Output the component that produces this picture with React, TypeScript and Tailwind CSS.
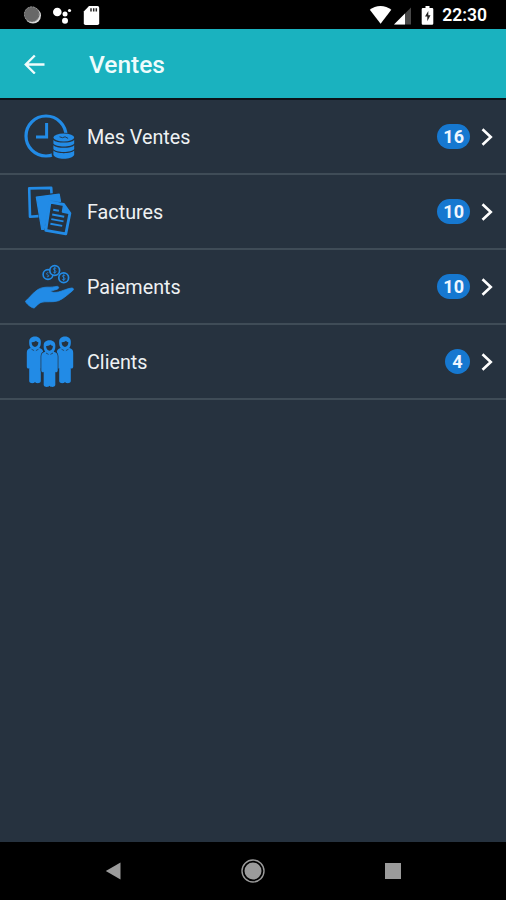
import type { ReactNode } from "react";

const SalesIcon = () => (
  <svg viewBox="8 5 52 52" className="size-[52px]" fill="none" stroke="#228be6">
    <circle cx="30" cy="30" r="20" strokeWidth="3.2" />
    <path d="M30.6 17v14H20" strokeWidth="3" />
    <path
      d="M36.5 32c0-6 22.5-6 22.5 0v16.500c0 7-22.500 7-22.500 0z"
      fill="#26323f"
      stroke="#26323f"
      strokeWidth="1.600"
    />
    <g fill="#228be6" stroke="none">
      <ellipse cx="47.800" cy="31.500" rx="10.400" ry="4" />
      <path d="M37.400 33.900c3 3.500 17.800 3.500 20.800 0v3.700c-2 4-18.800 4-20.800 0z" />
      <path d="M37.400 39.200c3 3.500 17.800 3.500 20.800 0v3.700c-2 4-18.800 4-20.800 0z" />
      <path d="M37.400 44.500c3 3.500 17.800 3.500 20.800 0v4.200c-2 5.300-18.800 5.300-20.800 0z" />
    </g>
    <path d="M43.500 30.800l3 .9 2.600-.9 3 1.600" stroke="#26323f" strokeWidth=".9" />
  </svg>
);

const InvoiceIcon = () => (
  <svg viewBox="8 7.500 52 52" className="size-[52px]" fill="none" stroke="#228be6" strokeLinejoin="round">
    <path d="M22.500 37.600l-8.500.6-.800-28.300 22-.500.300 5.500" strokeWidth="2.600" />
    <path d="M20.300 18.600l22.900-3 1.300 7.200-10.300-.500-6.200 28.500h-2.300z" fill="#228be6" strokeWidth="1.200" />
    <path d="M34 23.600l13.700 2.400 6.200 8.700-4.100 20.700-20-3.500z" fill="#26323f" strokeWidth="2.800" />
    <path d="M47.700 26.200l-1.200 7.200 7.200 1.700z" fill="#228be6" strokeWidth="1.500" />
    <path d="M37.200 31.300l5.700 1M36.200 36l12 2.300M35.300 40.600l12.200 2.300M34.400 45.200l11.800 2.200" strokeWidth="1.900" />
  </svg>
);

const PaymentIcon = () => (
  <svg viewBox="8 5.500 52 52" className="size-[52px]" fill="none" stroke="#228be6">
    <circle cx="32" cy="19" r="4.900" strokeWidth="1.600" />
    <circle cx="38.700" cy="15" r="4.900" fill="#26323f" strokeWidth="1.700" />
    <circle cx="47.700" cy="22.200" r="4.900" strokeWidth="1.700" />
    <path
      d="M40.200 12.900c-2.800-1.500-3.500 1.200-1.500 1.900 2.400.8 1.200 3.500-1.400 1.900M38.700 11.800v6.400M49.200 20.100c-2.800-1.500-3.500 1.200-1.500 1.900 2.400.8 1.200 3.500-1.400 1.900M47.700 19v6.400M32.300 17.200c-2.500 0-2 2-.4 2.300 1.500.4 1 2-1 1.600"
      strokeWidth=".9"
    />
    <path
      d="M9.500 45.600C14 42 17 37 22 34c3.500-2.200 8-2.500 12-2.300 3.500 0 5-.9 7.700-.8 1.400.3 1.200 2-.2 2.700-2 1.100-4.700 1-6.800 2.200.7 1.400 4.800 1.200 7.600.7 5-1.200 9-3.600 13.500-4 1.900 0 2.300 1.600.8 2.700-4 3-8.600 7.700-14 10-5.600 2-13 .2-17.600 1.700-2.700 1.200-4.400 3.400-6.700 5.500-1.500.8-8.500-4-8.800-6.800z"
      fill="#228be6"
      strokeWidth=".8"
    />
  </svg>
);

const Person = ({ x, y }: { x: number; y: number }) => (
  <g transform={`translate(${x} ${y})`}>
    <path
      d="M-5.800 5C-5.800-1.400 5.800-1.400 5.800 5c.2 2.800-.2 4.800-1.500 6.800C7.300 12.500 8.200 14 8.200 16.500V30.500c0 1.800-2 2.200-2.400 1.200V45c-.6 2.500-4.600 2.500-5.800.8-1.200 1.700-5.200 1.700-5.800-.8V31.700C-6.200 32.700-8.200 32.300-8.200 30.500V16.500c0-2.500.9-4 3.900-4.700-1.300-2-1.700-4-1.500-6.800z"
      fill="#228be6"
      stroke="#26323f"
      strokeWidth="1.400"
      paintOrder="stroke"
    />
    <path d="M-3.400 6c2 .2 3.600-.4 4.400-1.400.5.800 1.200 1.300 2.400 1.400C3.400 8.900 1.600 10.700 0 10.700S-3.400 8.900-3.400 6z" fill="#26323f" />
    <path d="M-3.500 13l2.600 1.400M3.500 13L.9 14.400" stroke="#26323f" strokeWidth=".7" />
  </g>
);

const ClientsIcon = () => (
  <svg viewBox="8 8 52 52" className="size-[52px]">
    <Person x={19} y={8.200} />
    <Person x={49} y={8.200} />
    <Person x={33.500} y={12} />
  </svg>
);

type MenuItem = { label: string; count: number; icon: ReactNode };

const items: MenuItem[] = [
  { label: "Mes Ventes", count: 16, icon: <SalesIcon /> },
  { label: "Factures", count: 10, icon: <InvoiceIcon /> },
  { label: "Paiements", count: 10, icon: <PaymentIcon /> },
  { label: "Clients", count: 4, icon: <ClientsIcon /> },
];

const StatusBar = () => (
  <div className="flex h-[29px] shrink-0 items-center justify-between bg-black pr-[19px] pl-[23px]">
    <svg width="80" height="29" viewBox="23 0 80 29" fill="#fff">
      <circle cx="33" cy="15.600" r="8" fill="#d8d8d8" />
      <circle cx="31.800" cy="14.300" r="7.800" fill="#686868" />
      <circle cx="31.800" cy="14.300" r="7.400" fill="none" stroke="#999" strokeWidth="1" strokeDasharray="1.500 1.500" />
      <circle cx="57.300" cy="12" r="4.300" />
      <circle cx="65" cy="14" r="2.500" />
      <circle cx="69.500" cy="10.500" r="1.600" />
      <circle cx="65" cy="20.700" r="3" />
      <path d="M89 6h8.500q1.700 0 1.700 1.700v15.600q0 1.700-1.700 1.700h-12q-1.700 0-1.700-1.700V11.500z" />
      <path d="M91 8.300v3.200M93.700 8.300v3.200M96.300 8.300v3.200" stroke="#222" strokeWidth="1.500" />
    </svg>
    <div className="flex items-center gap-[8px]">
      <svg width="65" height="29" viewBox="370 0 65 29" fill="#fff">
        <path d="M370.800 9.800C376.500 4.700 386.500 4.700 392.300 9.800L381.600 23.700z" />
        <path d="M412 7.500V24.500H395z" fill="#484848" />
        <path d="M406 13.500V24.500H395z" />
        <path d="M426.500 6h4v2h2.600q1.200 0 1.200 1.200v14.300q0 1.300-1.200 1.300h-9.200q-1.200 0-1.200-1.300V9.200q0-1.200 1.200-1.200h2.600z" />
        <path d="M429.300 11l-3.300 5.500h2.300v4.700l3.200-5.900h-2.200z" fill="#222" />
      </svg>
      <span className="pt-[3px] text-[17.500px] leading-none font-semibold text-white">22:30</span>
    </div>
  </div>
);

const AppBar = () => (
  <header className="flex h-[71px] shrink-0 items-center border-b-2 border-[#0b1318] bg-[#1ab2bf] pl-[24px]">
    <svg width="21" height="20" viewBox="0 0 21 20" fill="none" stroke="#effcfc" strokeWidth="2.400">
      <path d="M20.500 10.500H2M10.800 1.500L1.800 10.500l9 9" />
    </svg>
    <h1 className="ml-[44px] pt-[4px] text-[24.500px] leading-none font-medium text-[#effcfc]">Ventes</h1>
  </header>
);

const MenuRow = ({ label, count, icon }: MenuItem) => (
  <li className="flex h-[75px] items-center border-b-2 border-[#3f4c57] pr-[13px] pl-[24px]">
    {icon}
    <span className="ml-[11px] flex-1 pt-[2px] text-[19.750px] leading-none text-[#eef1f3]">{label}</span>
    <span className="flex h-[25px] min-w-[25px] items-center justify-center rounded-full bg-[#1678d0] px-[6px] pt-px text-[18px] leading-none font-bold text-[#eef6ff]">
      {count}
    </span>
    <svg width="12" height="18" viewBox="0 0 12 18" className="ml-[11px]" fill="none" stroke="#fff" strokeWidth="2.600">
      <path d="M1.500 1.200L9.800 9l-8.300 7.800" />
    </svg>
  </li>
);

const NavBar = () => (
  <nav className="flex h-[58px] shrink-0 items-center justify-between bg-black pr-[105px] pl-[105px]">
    <svg width="16" height="18" viewBox="0 0 16 18">
      <path d="M15.500.5v17L.8 9z" fill="#9b9b9b" />
    </svg>
    <svg width="24" height="24" viewBox="0 0 24 24">
      <circle cx="12" cy="12" r="11" fill="none" stroke="#9b9b9b" strokeWidth="1.400" />
      <circle cx="12" cy="12" r="8.500" fill="#9b9b9b" />
    </svg>
    <div className="size-4 bg-[#9b9b9b]" />
  </nav>
);

export default function App() {
  return (
    <div className="flex h-[900px] w-[506px] flex-col overflow-hidden bg-[#26323f] font-[Roboto,sans-serif]">
      <StatusBar />
      <AppBar />
      <ul className="flex-1">
        {items.map((item) => (
          <MenuRow key={item.label} {...item} />
        ))}
      </ul>
      <NavBar />
    </div>
  );
}
